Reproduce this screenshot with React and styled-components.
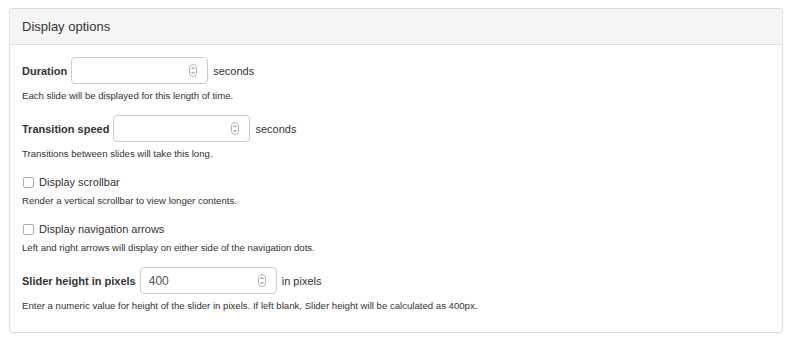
import React from 'react'
import styled, { createGlobalStyle } from 'styled-components'

const Global = createGlobalStyle`
  body {
    margin: 0;
    background: #fff;
    font-family: "Liberation Sans", Arial, sans-serif;
    color: #333;
  }
`

const Page = styled.div`
  padding: 8px 11px 0 9px;
`

const Panel = styled.section`
  border: 1px solid #ddd;
  border-radius: 4px;
  background: #fff;
  overflow: hidden;
`

const Heading = styled.header`
  background: #f5f5f5;
  border-bottom: 1px solid #ddd;
  padding: 10px 12px 9px;
  font-size: 13px;
  line-height: 16px;
  color: #333;
`

const Body = styled.div`
  padding: 12px 12px 20px;
`

const Group = styled.div`
  margin-bottom: 13px;
  &:last-child { margin-bottom: 0; }
`

const Row = styled.div`
  display: flex;
  align-items: center;
  height: 27px;
  font-size: 11px;
`

const Label = styled.label`
  font-weight: bold;
  font-size: 11px;
  margin-right: 4px;
`

const NumberBox = styled.div`
  display: flex;
  align-items: center;
  width: 137px;
  height: 27px;
  box-sizing: border-box;
  border: 1px solid #ccc;
  border-radius: 4px;
  padding: 0 10px 0 8px;
  margin-right: 5px;
  input {
    flex: 1;
    min-width: 0;
    border: 0;
    outline: 0;
    padding: 0;
    font: 12px "Liberation Sans", Arial, sans-serif;
    color: #555;
    background: transparent;
  }
`

const CheckRow = styled.label`
  display: flex;
  align-items: center;
  height: 18px;
  font-size: 11px;
`

const Box = styled.span`
  width: 9px;
  height: 9px;
  border: 1px solid #aaa;
  border-radius: 2px;
  margin: 0 5px 0 1px;
  background: #fff;
`

const Help = styled.p`
  margin: ${p => (p.$tight ? '3px' : '5px')} 0 0;
  font-size: 9.6px;
  line-height: 13px;
  color: #333;
`

const Spinner = () => (
  <svg width="8" height="13" viewBox="0 0 8 13">
    <rect x="0.5" y="0.5" width="7" height="12" rx="3.5" fill="#fff" stroke="#b5b5b5" />
    <path d="M2.5 5 L4 3.5 L5.5 5" fill="none" stroke="#666" strokeWidth="0.9" />
    <path d="M2.5 8 L4 9.5 L5.5 8" fill="none" stroke="#666" strokeWidth="0.9" />
  </svg>
)

const NumberField = ({ label, value, suffix, help }) => (
  <Group>
    <Row>
      <Label>{label}</Label>
      <NumberBox>
        <input type="text" defaultValue={value} />
        <Spinner />
      </NumberBox>
      <span>{suffix}</span>
    </Row>
    <Help>{help}</Help>
  </Group>
)

const CheckField = ({ label, help }) => (
  <Group>
    <CheckRow>
      <Box />
      {label}
    </CheckRow>
    <Help $tight>{help}</Help>
  </Group>
)

export default function App() {
  return (
    <Page>
      <Global />
      <Panel>
        <Heading>Display options</Heading>
        <Body>
          <NumberField label="Duration" value="" suffix="seconds"
            help="Each slide will be displayed for this length of time." />
          <NumberField label="Transition speed" value="" suffix="seconds"
            help="Transitions between slides will take this long." />
          <CheckField label="Display scrollbar"
            help="Render a vertical scrollbar to view longer contents." />
          <CheckField label="Display navigation arrows"
            help="Left and right arrows will display on either side of the navigation dots." />
          <NumberField label="Slider height in pixels" value="400" suffix="in pixels"
            help="Enter a numeric value for height of the slider in pixels. If left blank, Slider height will be calculated as 400px." />
        </Body>
      </Panel>
    </Page>
  )
}
